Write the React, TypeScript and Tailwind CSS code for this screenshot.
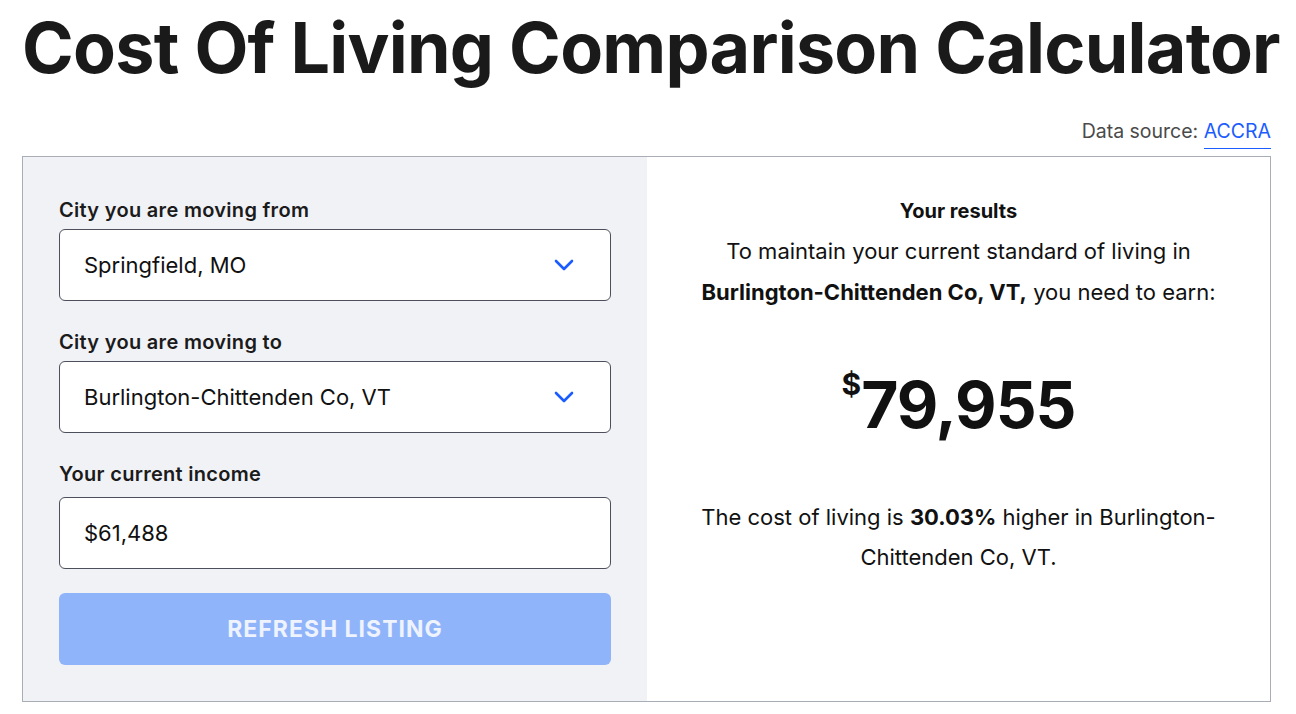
import React from "react";

function Chevron() {
  return (
    <svg width="20" height="12" viewBox="0 0 20 12" fill="none" className="shrink-0">
      <path d="M2 2l8 8 8-8" stroke="#1a5cff" strokeWidth="2.6" strokeLinecap="round" strokeLinejoin="round" />
    </svg>
  );
}

function Field({ label, value, select }: { label: string; value: string; select?: boolean }) {
  return (
    <div className={`flex flex-col ${select ? "gap-[8px]" : "gap-[12px]"}`}>
      <label className="text-[20px] font-semibold tracking-[0.3px] text-[#1b1b1b] leading-[22px]">{label}</label>
      <div className="h-[72px] rounded-[6px] border border-[#4d4f5c] bg-white flex items-center justify-between pl-[24px] pr-[36px]">
        <span className="text-[22px] text-[#111]">{value}</span>
        {select && <Chevron />}
      </div>
    </div>
  );
}

export default function App() {
  return (
    <div className="min-h-screen bg-white font-['Inter',sans-serif] text-[#111]">
      <div className="pl-[22px] pr-[25px] pt-[8px]">
        <h1 className="text-[70px] font-bold leading-[80px] tracking-[-0.75px] whitespace-nowrap text-[#1a1a1a]">
          Cost Of Living Comparison Calculator
        </h1>

        <div className="flex justify-end mt-[32px]">
          <div className="text-[19.5px] text-[#4a4a4a] leading-[22px]">
            Data source:{" "}
            <span className="text-[#1a5cff] inline-block border-b border-[#1a5cff] pb-[6px]">ACCRA</span>
          </div>
        </div>

        <div className="mt-[7px] border border-[#a9adb6] flex h-[546px]">
          {/* Form */}
          <div className="w-[624px] bg-[#f1f2f6] px-[36px] pt-[42px] flex flex-col gap-[30px]">
            <Field label="City you are moving from" value="Springfield, MO" select />
            <Field label="City you are moving to" value="Burlington-Chittenden Co, VT" select />
            <Field label="Your current income" value="$61,488" />
            <button
              type="button"
              className="-mt-[6px] h-[72px] rounded-[6px] bg-[#90b4fa] text-[#eef3ff] text-[23px] font-bold tracking-[1px] uppercase"
            >
              Refresh Listing
            </button>
          </div>

          {/* Results */}
          <div className="flex-1 flex flex-col items-center text-center pt-[42px] px-[30px]">
            <div className="text-[20px] font-bold leading-[24px]">Your results</div>
            <p className="mt-[8px] text-[22px] leading-[41px]">
              To maintain your current standard of living in
              <br />
              <span className="font-bold">Burlington-Chittenden Co, VT,</span> you need to earn:
            </p>
            <div className="mt-[56px] flex items-start font-bold text-[#111]">
              <span className="text-[30px] leading-[34px] -mt-[2px]">$</span>
              <span className="text-[64px] leading-[72px] tracking-[-1px]">79,955</span>
            </div>
            <p className="mt-[56px] text-[22px] leading-[40px] max-w-[530px]">
              The cost of living is <span className="font-bold">30.03%</span> higher in Burlington-Chittenden Co, VT.
            </p>
          </div>
        </div>
      </div>
    </div>
  );
}
